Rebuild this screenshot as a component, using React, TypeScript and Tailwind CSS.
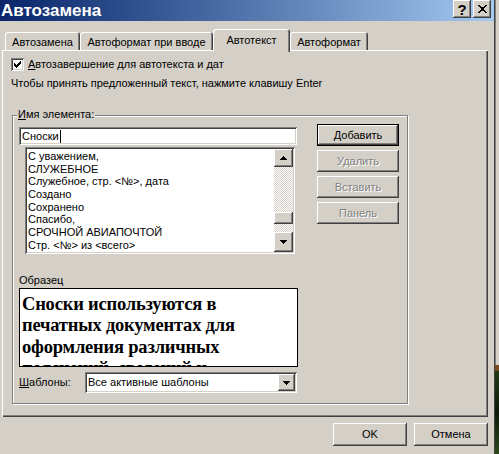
import React from "react";

const raised =
  "shadow-[inset_-1px_-1px_#404040,inset_1px_1px_#ffffff,inset_-2px_-2px_#808080,inset_2px_2px_#d4d0c8]";
const sunken =
  "shadow-[inset_1px_1px_#808080,inset_-1px_-1px_#ffffff,inset_2px_2px_#404040,inset_-2px_-2px_#d4d0c8]";

function Arrow({ up }: { up?: boolean }) {
  return (
    <svg width="7" height="4" viewBox="0 0 7 4" shapeRendering="crispEdges" className={up ? "rotate-180" : ""}>
      <path d="M0 0h7v1H0z M1 1h5v1H1z M2 2h3v1H2z M3 3h1v1H3z" fill="#000" />
    </svg>
  );
}

function TitleBtn({ children }: { children: React.ReactNode }) {
  return (
    <div className={`flex h-[18px] w-[18px] items-center justify-center bg-[#d4d0c8] ${raised}`}>{children}</div>
  );
}

function Tab({ label, active, w }: { label: string; active?: boolean; w: string }) {
  return (
    <div
      className={`flex items-start justify-center rounded-t-[3px] bg-[#d4d0c8] shadow-[inset_1px_1px_#ffffff,inset_-1px_0_#404040,inset_-2px_0_#808080] ${w} ${
        active ? "relative z-10 -mb-[2px] h-[23px] pt-[5px]" : "h-[18px] pt-[4px]"
      }`}
    >
      {label}
    </div>
  );
}

function SideBtn({ children, disabled, def }: { children: React.ReactNode; disabled?: boolean; def?: boolean }) {
  return (
    <div
      className={`flex h-[22px] w-[82px] items-center justify-center bg-[#d4d0c8] ${
        def ? "border border-black" : ""
      } ${raised} ${disabled ? "text-[#808080] [text-shadow:1px_1px_0_#ffffff]" : ""}`}
    >
      {children}
    </div>
  );
}

const items = [
  "С уважением,",
  "СЛУЖЕБНОЕ",
  "Служебное, стр. <№>, дата",
  "Создано",
  "Сохранено",
  "Спасибо,",
  "СРОЧНОЙ АВИАПОЧТОЙ",
  "Стр. <№> из <всего>",
];

export default function App() {
  return (
    <div className="flex h-[454px] w-[499px] overflow-hidden bg-[#d4d0c8] font-['Liberation_Sans',Arial,sans-serif] text-[11px] leading-[13px] text-black">
      <div className="flex h-full w-[495px] shrink-0 flex-col border-r border-[#404040]">
        {/* title bar */}
        <div className="flex h-[21px] shrink-0 items-start justify-between bg-linear-to-r from-[#0a246a] to-[#a6caf0]">
          <span className="pl-[1px] pt-[1px] text-[17px] font-bold leading-[19px] text-white">Автозамена</span>
          <div className="flex gap-[2px] pr-[3px]">
            <TitleBtn>
              <span className="text-[15px] font-bold leading-[15px]">?</span>
            </TitleBtn>
            <TitleBtn>
              <svg width="9" height="8" viewBox="0 0 9 8" shapeRendering="crispEdges">
                <path
                  d="M0 0h2v1H0z M7 0h2v1H7z M1 1h2v1H1z M6 1h2v1H6z M2 2h5v1H2z M3 3h3v1H3z M3 4h3v1H3z M2 5h5v1H2z M1 6h2v1H1z M6 6h2v1H6z M0 7h2v1H0z M7 7h2v1H7z"
                  fill="#000"
                />
              </svg>
            </TitleBtn>
          </div>
        </div>

        {/* tabs */}
        <div className="flex h-[29px] shrink-0 items-end pl-[5px]">
          <Tab label="Автозамена" w="w-[75px]" />
          <Tab label="Автоформат при вводе" w="w-[133px]" />
          <Tab label="Автотекст" w="w-[77px]" active />
          <Tab label="Автоформат" w="w-[78px]" />
        </div>

        {/* panel */}
        <div className="ml-[2px] flex h-[367px] w-[486px] shrink-0 flex-col pl-[9px] pt-[8px] shadow-[inset_1px_1px_#ffffff,inset_-1px_-1px_#404040,inset_-2px_-2px_#808080]">
          <div className="flex h-[13px] items-center gap-[4px]">
            <div className={`flex h-[13px] w-[13px] items-center justify-center bg-white ${sunken}`}>
              <svg width="7" height="7" viewBox="0 0 7 7" shapeRendering="crispEdges">
                <path
                  d="M6 0h1v1H6z M5 1h2v1H5z M0 2h1v1H0z M4 2h3v1H4z M0 3h2v1H0z M3 3h3v1H3z M0 4h5v1H0z M1 5h3v1H1z M2 6h1v1H2z"
                  fill="#000"
                />
              </svg>
            </div>
            <span>
              <span className="underline">А</span>втозавершение для автотекста и дат
            </span>
          </div>
          <div className="mt-[6px] h-[13px]">Чтобы принять предложенный текст, нажмите клавишу Enter</div>

          {/* group box */}
          <div className="relative ml-[1px] mt-[25px] flex h-[289px] w-[396px] border border-[#808080] pl-[6px] pt-[11px] shadow-[inset_1px_1px_#ffffff,1px_1px_#ffffff]">
            <span className="absolute left-[4px] top-[-8px] bg-[#d4d0c8] px-[1px]">
              <span className="underline">И</span>мя элемента:
            </span>

            <div className="flex w-[278px] flex-col">
              <div className={`flex h-[18px] w-[278px] items-center bg-white pl-[3px] ${sunken}`}>
                Сноски<span className="ml-[1px] h-[13px] w-[1px] bg-black" />
              </div>

              <div className={`ml-[6px] mt-[2px] flex h-[107px] w-[270px] bg-white p-[2px] ${sunken}`}>
                <div className="flex-1 overflow-hidden pl-[1px] pt-[1px]">
                  {items.map((t) => (
                    <div key={t} className="h-[12.7px] whitespace-nowrap leading-[12.7px]">
                      {t}
                    </div>
                  ))}
                </div>
                <div className="flex w-[19px] flex-col">
                  <div className={`flex h-[18px] items-center justify-center bg-[#d4d0c8] ${raised}`}>
                    <Arrow up />
                  </div>
                  <div className="flex flex-1 flex-col bg-[repeating-conic-gradient(#d4d0c8_0_25%,#ffffff_0_50%)] bg-[length:2px_2px] pt-[45px]">
                    <div className={`h-[12px] bg-[#d4d0c8] ${raised}`} />
                  </div>
                  <div className={`flex h-[20px] items-center justify-center bg-[#d4d0c8] ${raised}`}>
                    <Arrow />
                  </div>
                </div>
              </div>

              <div className="mt-[20px] h-[13px]">Образец</div>

              <div className="mt-[1px] h-[79px] w-[279px] overflow-hidden border border-black bg-white pl-[2px] pt-[5px] font-['Liberation_Serif','Times_New_Roman',serif] text-[18.5px] font-bold leading-[21.3px] tracking-[-0.2px] whitespace-nowrap">
                Сноски используются в<br />
                печатных документах для<br />
                оформления различных<br />
                пояснений, сведений и
              </div>

              <div className="mt-[5px] flex h-[21px] items-center">
                <span className="w-[66px]">
                  <span className="underline">Ш</span>аблоны:
                </span>
                <div className={`flex h-[21px] w-[212px] items-center bg-white p-[2px] ${sunken}`}>
                  <span className="flex-1 pl-[1px]">Все активные шаблоны</span>
                  <div className={`flex h-[17px] w-[17px] items-center justify-center bg-[#d4d0c8] ${raised}`}>
                    <Arrow />
                  </div>
                </div>
              </div>
            </div>

            <div className="ml-[20px] mt-[-3px] flex flex-col gap-[4px]">
              <SideBtn def>
                <span>
                  <span className="underline">Д</span>обавить
                </span>
              </SideBtn>
              <SideBtn disabled>Удалить</SideBtn>
              <SideBtn disabled>Вставить</SideBtn>
              <SideBtn disabled>Панель</SideBtn>
            </div>
          </div>
        </div>

        {/* bottom buttons */}
        <div className="mt-[6px] flex justify-end gap-[7px] pr-[6px]">
          <div className={`flex h-[23px] w-[74px] items-center justify-center bg-[#d4d0c8] ${raised}`}>OK</div>
          <div className={`flex h-[23px] w-[74px] items-center justify-center bg-[#d4d0c8] ${raised}`}>Отмена</div>
        </div>
      </div>

      {/* background strip */}
      <div className="flex w-[4px] flex-col">
        <div className="h-[365px] border-l border-[#808080] bg-[#d4d0c8]" />
        <div className="h-[6px] bg-[#7a4a20]" />
        <div className="flex-1 bg-linear-to-b from-[#1f3a14] via-[#0f1a0a] to-[#2d4a1c]" />
      </div>
    </div>
  );
}
